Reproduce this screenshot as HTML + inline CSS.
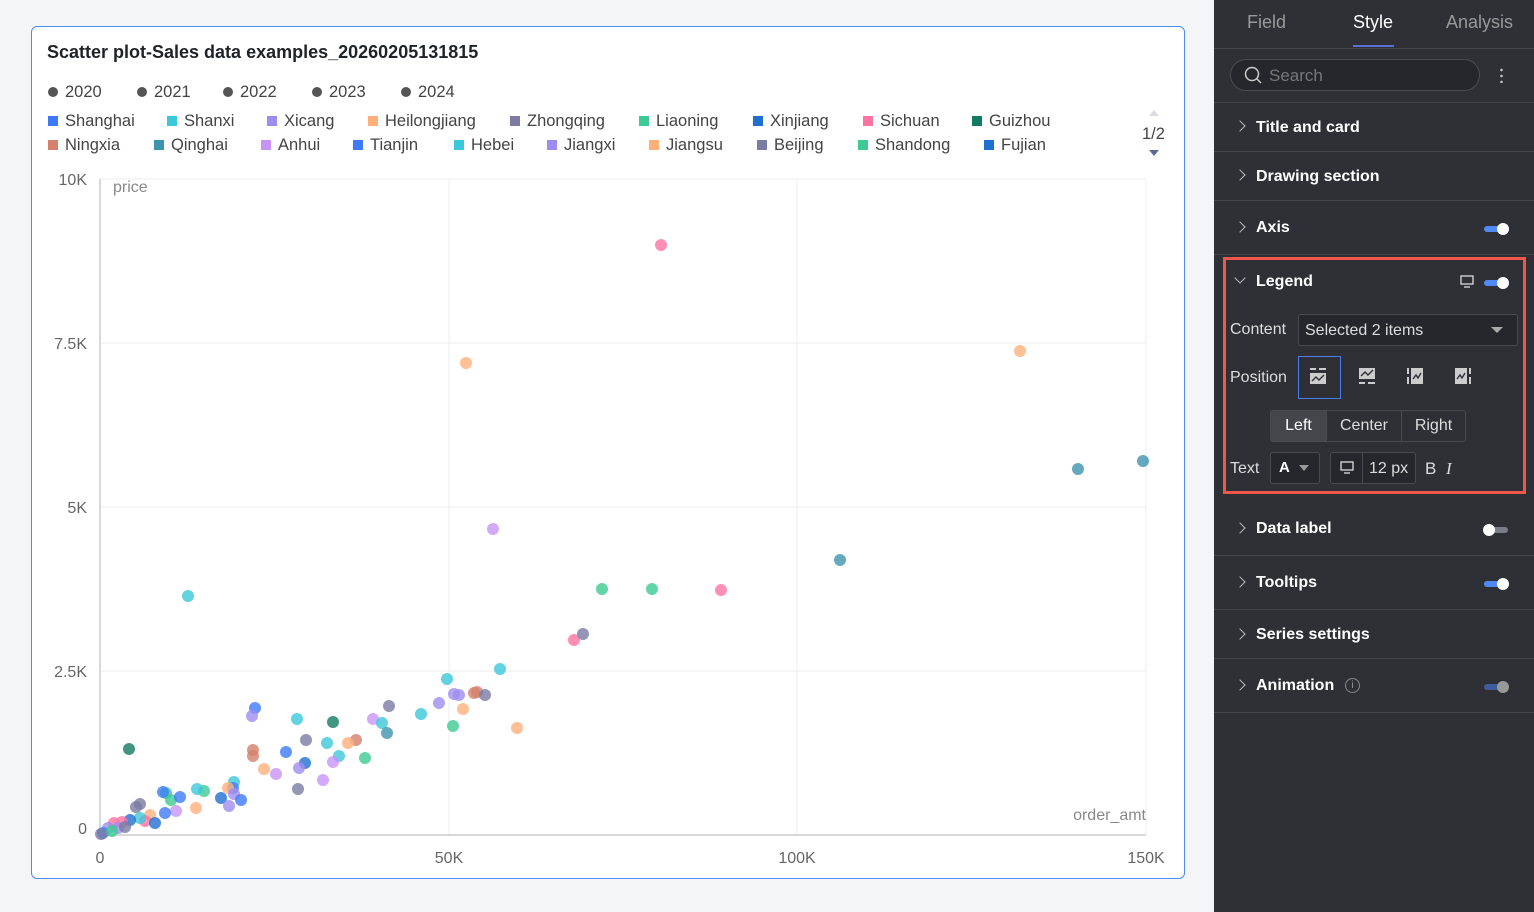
<!DOCTYPE html>
<html><head><meta charset="utf-8"><style>
*{margin:0;padding:0;box-sizing:border-box}
body{width:1534px;height:912px;background:#f4f5f7;font-family:"Liberation Sans",Arial,sans-serif;position:relative;overflow:hidden}
.card{position:absolute;left:31px;top:26px;width:1154px;height:853px;background:#fff;border:1.5px solid #4b8cf5;border-radius:6px}
.title{position:absolute;left:47px;top:42px;font-size:18px;font-weight:bold;color:#1f2329}
.lg{position:absolute;font-size:16.5px;color:#444;white-space:nowrap}
.lg i{display:inline-block;width:10px;height:10px;margin-right:7px;vertical-align:0px}
.dot{display:inline-block;width:10px;height:10px;border-radius:50%;background:#555;margin-right:7px}
.panel{position:absolute;left:1214px;top:0;width:320px;height:912px;background:#2f3036;color:#fff}
.tab{position:absolute;top:12px;font-size:18px}
.row{position:absolute;left:0;width:320px;border-bottom:1px solid #45464c}
.row .lbl{position:absolute;left:42px;font-size:16px;font-weight:bold}
.chev{position:absolute;left:22px;width:8px;height:8px;border-right:1.5px solid #bbb;border-top:1.5px solid #bbb;transform:rotate(45deg)}
.tg{position:absolute;left:270px;width:24px;height:6px;border-radius:3px;background:#4f8bf7}
.tg::after{content:"";position:absolute;right:-1px;top:-3px;width:12px;height:12px;border-radius:50%;background:#fff}
.s{font-size:16px;color:#ddd;position:absolute}
</style></head><body>
<div class="card"></div>
<div class="title">Scatter plot-Sales data examples_20260205131815</div>
<div class="lg" style="left:48px;top:83px"><span class="dot"></span>2020</div>
<div class="lg" style="left:137px;top:83px"><span class="dot"></span>2021</div>
<div class="lg" style="left:223px;top:83px"><span class="dot"></span>2022</div>
<div class="lg" style="left:312px;top:83px"><span class="dot"></span>2023</div>
<div class="lg" style="left:401px;top:83px"><span class="dot"></span>2024</div>

<div class="lg" style="left:48px;top:112px"><i style="background:#3e7bfa"></i>Shanghai</div>
<div class="lg" style="left:167px;top:112px"><i style="background:#3cc8db"></i>Shanxi</div>
<div class="lg" style="left:267px;top:112px"><i style="background:#9f8cf0"></i>Xicang</div>
<div class="lg" style="left:368px;top:112px"><i style="background:#ffb07a"></i>Heilongjiang</div>
<div class="lg" style="left:510px;top:112px"><i style="background:#7b7ba3"></i>Zhongqing</div>
<div class="lg" style="left:639px;top:112px"><i style="background:#3ccb94"></i>Liaoning</div>
<div class="lg" style="left:753px;top:112px"><i style="background:#1f6fd1"></i>Xinjiang</div>
<div class="lg" style="left:863px;top:112px"><i style="background:#ff73a1"></i>Sichuan</div>
<div class="lg" style="left:972px;top:112px"><i style="background:#137a64"></i>Guizhou</div>

<div class="lg" style="left:48px;top:136px"><i style="background:#d4806a"></i>Ningxia</div>
<div class="lg" style="left:154px;top:136px"><i style="background:#3d94ae"></i>Qinghai</div>
<div class="lg" style="left:261px;top:136px"><i style="background:#c893f7"></i>Anhui</div>
<div class="lg" style="left:353px;top:136px"><i style="background:#3e7bfa"></i>Tianjin</div>
<div class="lg" style="left:454px;top:136px"><i style="background:#3cc8db"></i>Hebei</div>
<div class="lg" style="left:547px;top:136px"><i style="background:#9f8cf0"></i>Jiangxi</div>
<div class="lg" style="left:649px;top:136px"><i style="background:#ffb07a"></i>Jiangsu</div>
<div class="lg" style="left:757px;top:136px"><i style="background:#7b7ba3"></i>Beijing</div>
<div class="lg" style="left:858px;top:136px"><i style="background:#3ccb94"></i>Shandong</div>
<div class="lg" style="left:984px;top:136px"><i style="background:#1f6fd1"></i>Fujian</div>
<div style="position:absolute;left:1149px;top:110px;width:0;height:0;border:5px solid transparent;border-bottom:6px solid #d8dbe2;border-top:0"></div>
<div class="lg" style="left:1142px;top:125px">1/2</div>
<div style="position:absolute;left:1149px;top:150px;width:0;height:0;border:5px solid transparent;border-top:6px solid #5e6a94;border-bottom:0"></div>

<svg style="position:absolute;left:0;top:0" width="1200" height="912" font-family="Liberation Sans, Arial" font-size="16" fill="#666">
<g stroke="#ececec" stroke-width="1">
<line x1="100" y1="179" x2="1146" y2="179"/><line x1="100" y1="343" x2="1146" y2="343"/><line x1="100" y1="507" x2="1146" y2="507"/><line x1="100" y1="671" x2="1146" y2="671"/>
<line x1="449" y1="179" x2="449" y2="835"/><line x1="797" y1="179" x2="797" y2="835"/><line x1="1146" y1="179" x2="1146" y2="835"/>
</g>
<line x1="100" y1="179" x2="100" y2="835" stroke="#ccc" stroke-width="1.5"/>
<line x1="100" y1="835" x2="1146" y2="835" stroke="#ccc" stroke-width="1.5"/>
<text x="87" y="185" text-anchor="end">10K</text>
<text x="87" y="349" text-anchor="end">7.5K</text>
<text x="87" y="513" text-anchor="end">5K</text>
<text x="87" y="677" text-anchor="end">2.5K</text>
<text x="87" y="834" text-anchor="end">0</text>
<text x="113" y="192" fill="#888">price</text>
<text x="1146" y="820" text-anchor="end" fill="#888">order_amt</text>
<text x="100" y="863" text-anchor="middle">0</text>
<text x="449" y="863" text-anchor="middle">50K</text>
<text x="797" y="863" text-anchor="middle">100K</text>
<text x="1146" y="863" text-anchor="middle">150K</text>
<g fill-opacity="0.8">
<circle cx="661" cy="245" r="6" fill="#ff73a1"/><circle cx="466" cy="363" r="6" fill="#ffb07a"/><circle cx="1020" cy="351" r="6" fill="#ffb07a"/>
<circle cx="1078" cy="469" r="6" fill="#3d94ae"/><circle cx="1143" cy="461" r="6" fill="#3d94ae"/><circle cx="840" cy="560" r="6" fill="#3d94ae"/>
<circle cx="493" cy="529" r="6" fill="#c893f7"/><circle cx="602" cy="589" r="6" fill="#3ccb94"/><circle cx="652" cy="589" r="6" fill="#3ccb94"/>
<circle cx="721" cy="590" r="6" fill="#ff73a1"/><circle cx="574" cy="640" r="6" fill="#ff73a1"/><circle cx="583" cy="634" r="6" fill="#7b7ba3"/>
<circle cx="188" cy="596" r="6" fill="#3cc8db"/><circle cx="500" cy="669" r="6" fill="#3cc8db"/><circle cx="447" cy="679" r="6" fill="#3cc8db"/>
<circle cx="454" cy="694" r="6" fill="#9f8cf0"/><circle cx="459" cy="695" r="6" fill="#9f8cf0"/><circle cx="474" cy="693" r="6" fill="#d4806a"/><circle cx="477" cy="692" r="6" fill="#d4806a"/>
<circle cx="485" cy="695" r="6" fill="#7b7ba3"/><circle cx="439" cy="703" r="6" fill="#9f8cf0"/><circle cx="463" cy="709" r="6" fill="#ffb07a"/><circle cx="517" cy="728" r="6" fill="#ffb07a"/>
<circle cx="453" cy="726" r="6" fill="#3ccb94"/><circle cx="421" cy="714" r="6" fill="#3cc8db"/><circle cx="389" cy="706" r="6" fill="#7b7ba3"/><circle cx="373" cy="719" r="6" fill="#c893f7"/>
<circle cx="382" cy="723" r="6" fill="#3cc8db"/><circle cx="387" cy="733" r="6" fill="#3d94ae"/><circle cx="356" cy="740" r="6" fill="#d4806a"/><circle cx="348" cy="743" r="6" fill="#ffb07a"/>
<circle cx="333" cy="722" r="6" fill="#137a64"/><circle cx="297" cy="719" r="6" fill="#3cc8db"/><circle cx="306" cy="740" r="6" fill="#7b7ba3"/><circle cx="327" cy="743" r="6" fill="#3cc8db"/>
<circle cx="339" cy="756" r="6" fill="#3cc8db"/><circle cx="333" cy="762" r="6" fill="#c893f7"/><circle cx="365" cy="758" r="6" fill="#3ccb94"/><circle cx="323" cy="780" r="6" fill="#c893f7"/>
<circle cx="298" cy="789" r="6" fill="#7b7ba3"/><circle cx="286" cy="752" r="6" fill="#3e7bfa"/><circle cx="305" cy="763" r="6" fill="#1f6fd1"/><circle cx="299" cy="768" r="6" fill="#9f8cf0"/>
<circle cx="255" cy="708" r="6" fill="#3e7bfa"/><circle cx="252" cy="716" r="6" fill="#9f8cf0"/><circle cx="253" cy="750" r="6" fill="#d4806a"/><circle cx="253" cy="756" r="6" fill="#d4806a"/>
<circle cx="264" cy="769" r="6" fill="#ffb07a"/><circle cx="276" cy="774" r="6" fill="#c893f7"/><circle cx="234" cy="782" r="6" fill="#3cc8db"/><circle cx="233" cy="788" r="6" fill="#3e7bfa"/>
<circle cx="228" cy="788" r="6" fill="#ffb07a"/><circle cx="234" cy="794" r="6" fill="#9f8cf0"/><circle cx="221" cy="798" r="6" fill="#1f6fd1"/><circle cx="241" cy="800" r="6" fill="#3e7bfa"/>
<circle cx="229" cy="806" r="6" fill="#9f8cf0"/><circle cx="204" cy="791" r="6" fill="#3ccb94"/><circle cx="197" cy="789" r="6" fill="#3cc8db"/><circle cx="196" cy="808" r="6" fill="#ffb07a"/>
<circle cx="129" cy="749" r="6" fill="#137a64"/><circle cx="166" cy="793" r="6" fill="#3ccb94"/><circle cx="171" cy="800" r="6" fill="#3ccb94"/><circle cx="180" cy="797" r="6" fill="#3e7bfa"/>
<circle cx="163" cy="792" r="6" fill="#3e7bfa"/><circle cx="140" cy="804" r="6" fill="#7b7ba3"/><circle cx="136" cy="807" r="6" fill="#7b7ba3"/><circle cx="176" cy="811" r="6" fill="#c893f7"/>
<circle cx="165" cy="813" r="6" fill="#3e7bfa"/><circle cx="150" cy="815" r="6" fill="#ffb07a"/><circle cx="145" cy="821" r="6" fill="#ff73a1"/><circle cx="155" cy="823" r="6" fill="#1f6fd1"/>
<circle cx="140" cy="818" r="6" fill="#3cc8db"/><circle cx="130" cy="820" r="6" fill="#1f6fd1"/><circle cx="122" cy="822" r="6" fill="#ff73a1"/><circle cx="114" cy="823" r="6" fill="#ff73a1"/>
<circle cx="118" cy="828" r="6" fill="#9f8cf0"/><circle cx="125" cy="827" r="6" fill="#7b7ba3"/><circle cx="108" cy="828" r="6" fill="#9f8cf0"/><circle cx="103" cy="833" r="6" fill="#3e7bfa"/>
<circle cx="101" cy="834" r="6" fill="#7b7ba3"/><circle cx="112" cy="831" r="6" fill="#3ccb94"/>
</g>
</svg>

<div class="panel">
<div class="tab" style="left:33px;color:#999">Field</div>
<div class="tab" style="left:139px;color:#fff">Style</div>
<div class="tab" style="left:232px;color:#999">Analysis</div>
<div style="position:absolute;left:139px;top:45px;width:41px;height:2px;background:#5b6fd6"></div>
<div class="row" style="top:0;height:49px"></div>
<div style="position:absolute;left:16px;top:59px;width:250px;height:32px;border:1px solid #4a4b52;border-radius:16px;background:#26272c"></div>
<svg style="position:absolute;left:30px;top:66px" width="20" height="20"><circle cx="8" cy="8" r="6.5" stroke="#ccc" stroke-width="1.5" fill="none"/><line x1="13" y1="13" x2="17" y2="17" stroke="#ccc" stroke-width="1.5"/></svg>
<div style="position:absolute;left:55px;top:66px;font-size:17px;color:#777">Search</div>
<div style="position:absolute;left:286px;top:67px;width:3px;height:16px;background:radial-gradient(circle,#bbb 1.2px,transparent 1.5px) 0 0/3px 6px"></div>
<div class="row" style="top:49px;height:54px"></div>
<div class="row" style="top:103px;height:49px"><span class="chev" style="top:19px;transform:rotate(45deg)"></span><span class="lbl" style="top:16px">Title and card</span></div>
<div class="row" style="top:152px;height:49px"><span class="chev" style="top:19px"></span><span class="lbl" style="top:16px">Drawing section</span></div>
<div class="row" style="top:201px;height:54px"><span class="chev" style="top:22px"></span><span class="lbl" style="top:18px">Axis</span><span class="tg" style="top:25px"></span></div>
<div style="position:absolute;left:9px;top:257px;width:303px;height:237px;border:3px solid #f0594a"></div>
<span class="chev" style="left:22px;top:274px;transform:rotate(135deg)"></span>
<span style="position:absolute;left:42px;top:273px;font-size:16px;font-weight:bold">Legend</span>
<svg style="position:absolute;left:246px;top:275px" width="14" height="14"><rect x="1" y="1" width="12" height="8" stroke="#ddd" fill="none" stroke-width="1.3"/><line x1="4" y1="12" x2="10" y2="12" stroke="#ddd" stroke-width="1.3"/></svg>
<span class="tg" style="top:280px"></span>
<div class="s" style="left:16px;top:321px">Content</div>
<div style="position:absolute;left:84px;top:314px;width:220px;height:32px;border:1px solid #494a50;border-radius:3px;background:#26272c"></div>
<div class="s" style="left:91px;top:322px">Selected 2 items</div>
<div style="position:absolute;left:277px;top:327px;border:6px solid transparent;border-top:6px solid #aaa;border-bottom:0"></div>
<div class="s" style="left:16px;top:369px">Position</div>
<div style="position:absolute;left:84px;top:356px;width:43px;height:43px;border:1px solid #4a7ee8"></div>
<svg style="position:absolute;left:96px;top:368px" width="16" height="18"><rect x="0" y="0" width="6" height="2" fill="#ccc"/><rect x="9" y="0" width="7" height="2" fill="#ccc"/><rect x="0" y="5" width="16" height="11" fill="#ccc"/><path d="M2 13l4-4 3 3 5-5" stroke="#2f3036" fill="none" stroke-width="1.4"/></svg>
<svg style="position:absolute;left:145px;top:368px" width="16" height="18"><rect x="0" y="0" width="16" height="11" fill="#ccc"/><path d="M2 8l4-4 3 3 5-5" stroke="#2f3036" fill="none" stroke-width="1.4"/><rect x="0" y="14" width="6" height="2" fill="#ccc"/><rect x="9" y="14" width="7" height="2" fill="#ccc"/></svg>
<svg style="position:absolute;left:193px;top:368px" width="16" height="18"><rect x="0" y="0" width="2" height="6" fill="#ccc"/><rect x="0" y="9" width="2" height="7" fill="#ccc"/><rect x="4" y="0" width="12" height="16" fill="#ccc"/><path d="M6 11l3-4 2 3 3-5" stroke="#2f3036" fill="none" stroke-width="1.4"/></svg>
<svg style="position:absolute;left:241px;top:368px" width="16" height="18"><rect x="0" y="0" width="12" height="16" fill="#ccc"/><path d="M2 11l3-4 2 3 3-5" stroke="#2f3036" fill="none" stroke-width="1.4"/><rect x="14" y="0" width="2" height="6" fill="#ccc"/><rect x="14" y="9" width="2" height="7" fill="#ccc"/></svg>
<div style="position:absolute;left:56px;top:410px;width:196px;height:32px;border:1px solid #494a50;border-radius:3px;display:flex;font-size:16px;color:#ddd">
<div style="width:55px;background:#45464c;text-align:center;line-height:30px;color:#fff">Left</div>
<div style="width:75px;border-left:1px solid #494a50;text-align:center;line-height:30px">Center</div>
<div style="flex:1;border-left:1px solid #494a50;text-align:center;line-height:30px">Right</div></div>
<div class="s" style="left:16px;top:460px">Text</div>
<div style="position:absolute;left:56px;top:452px;width:50px;height:32px;border:1px solid #494a50;border-radius:3px;background:#26272c"></div>
<div class="s" style="left:65px;top:459px;color:#fff;font-weight:bold;font-size:15px">A</div>
<div style="position:absolute;left:85px;top:465px;border:5px solid transparent;border-top:6px solid #999;border-bottom:0"></div>
<div style="position:absolute;left:116px;top:452px;width:86px;height:32px;border:1px solid #494a50;border-radius:3px;background:#26272c"></div>
<div style="position:absolute;left:148px;top:453px;width:1px;height:30px;background:#494a50"></div>
<svg style="position:absolute;left:126px;top:461px" width="14" height="14"><rect x="1" y="1" width="12" height="8" stroke="#ddd" fill="none" stroke-width="1.3"/><line x1="4" y1="12" x2="10" y2="12" stroke="#ddd" stroke-width="1.3"/></svg>
<div class="s" style="left:155px;top:460px">12 px</div>
<div class="s" style="left:211px;top:459px;font-size:17px">B</div>
<div class="s" style="left:232px;top:459px;font-size:17px;font-style:italic;font-family:'Liberation Serif',serif">I</div>
<div class="row" style="top:500px;height:56px"><span class="chev" style="top:24px"></span><span class="lbl" style="top:20px">Data label</span><span class="tg" style="top:27px;background:#7a7d88"></span></div>
<div class="row" style="top:556px;height:54px"><span class="chev" style="top:22px"></span><span class="lbl" style="top:18px">Tooltips</span><span class="tg" style="top:25px"></span></div>
<div class="row" style="top:610px;height:49px"><span class="chev" style="top:20px"></span><span class="lbl" style="top:16px">Series settings</span></div>
<div class="row" style="top:659px;height:54px"><span class="chev" style="top:22px"></span><span class="lbl" style="top:18px">Animation</span>
<span style="position:absolute;left:131px;top:19px;width:15px;height:15px;border:1.3px solid #888;border-radius:50%;font-size:10px;color:#999;text-align:center;line-height:13px">i</span>
<span class="tg" style="top:25px;background:#3f5d9c"></span></div>
</div>
<style>
.row .tg[style*="7a7d88"]::after{right:auto;left:-1px}
.row .tg[style*="3f5d9c"]::after{background:#999}
</style>
</body></html>
